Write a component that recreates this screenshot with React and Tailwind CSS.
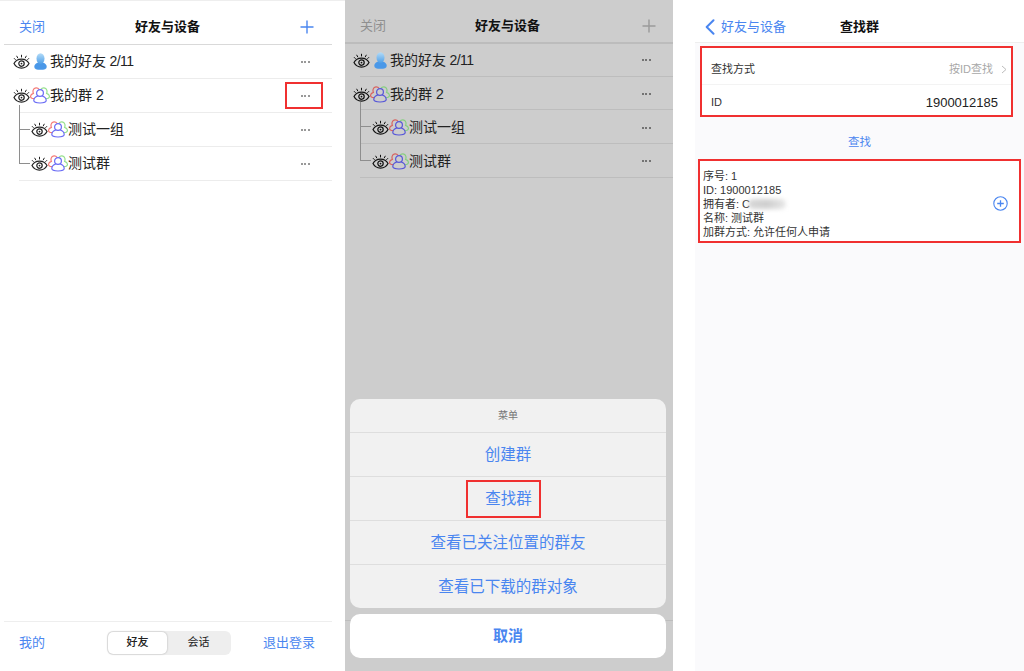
import React from "react";

const font = { fontFamily: '"Liberation Sans","Noto Sans CJK SC",sans-serif' };

function Eye({ dim }) {
  const c = dim ? "#111" : "#222";
  return (
    <svg width="17" height="15" viewBox="0 0 17 15" fill="none" stroke={c} className="shrink-0">
      <path d="M1 9.6 C4 3.6 13 3.6 16 9.6 C13 15.6 4 15.6 1 9.6Z" strokeWidth="1.2" />
      <circle cx="8.5" cy="9.6" r="2.7" strokeWidth="1.2" />
      <circle cx="8.5" cy="9.6" r="0.9" fill={c} stroke="none" />
      <path d="M8.5 0.8V3.4M3.6 1.8L4.9 4.2M13.4 1.8L12.1 4.2M1 4.2L2.6 5.8M16 4.2L14.4 5.8" strokeWidth="1" />
    </svg>
  );
}

function Person({ id }) {
  return (
    <svg width="13" height="17" viewBox="0 0 13 17" className="shrink-0">
      <defs>
        <linearGradient id={id} x1="0" y1="0" x2="0" y2="1">
          <stop offset="0" stopColor="#b4dcf8" />
          <stop offset="1" stopColor="#4f9fe8" />
        </linearGradient>
      </defs>
      <path d="M0.3 14C0.3 11 3 9.6 6.5 9.6S12.7 11 12.7 14C12.7 16 10.5 16.8 6.5 16.8S0.3 16 0.3 14Z" fill="#4a98e8" />
      <ellipse cx="6.5" cy="5.6" rx="4" ry="5.4" fill={`url(#${id})`} />
    </svg>
  );
}

function Group({ dim }) {
  const red = dim ? "#d8635f" : "#f47a76";
  const green = dim ? "#86cf80" : "#96e08d";
  const blue = dim ? "#5656d8" : "#6a6cf5";
  return (
    <svg width="20" height="17" viewBox="0 0 20 17" fill="none" strokeWidth="1.2" className="shrink-0">
      <path d="M4 11.6C1.8 11.6 0.4 10.8 0.6 9C0.8 7.4 2.2 6.8 3.4 6.4C2.6 4.6 2.8 1.2 6 0.9C7.4 0.8 8.4 1.4 9 2.4" stroke={red} />
      <path d="M11 2.4C11.6 1.4 12.6 0.8 14 0.9C17.2 1.2 17.4 4.6 16.6 6.4C17.8 6.8 19.2 7.4 19.4 9C19.6 10.8 18.2 11.6 16 11.6" stroke={green} />
      <circle cx="10" cy="6" r="3.4" stroke={blue} />
      <path d="M7.8 9C5.4 9.8 3.8 11.2 3.8 13.6C3.8 15.4 5.4 16 10 16S16.2 15.4 16.2 13.6C16.2 11.2 14.6 9.8 12.2 9" stroke={blue} />
    </svg>
  );
}

function MoreDots({ dim }) {
  const c = dim ? "bg-[#555]" : "bg-[#777]";
  return (
    <span className="flex gap-[1.5px]">
      <span className={`w-[2px] h-[2px] rounded-full ${c}`} />
      <span className={`w-[2px] h-[2px] rounded-full ${c}`} />
      <span className={`w-[2px] h-[2px] rounded-full ${c}`} />
    </span>
  );
}

function Row({ indent, icon, label, count, dim, boxed, line }) {
  return (
    <div
      className={`relative flex items-center ${dim ? "h-[33.7px] border-[#bdbdbd] pt-[2px]" : "h-[34px] border-[#ececec]"} border-b ${indent ? "pl-[13px]" : ""}`}
    >
      <div className={`flex items-center ${indent ? "ml-[-1px]" : dim ? "ml-[-7px]" : "ml-[-6px]"}`}>
        <Eye dim={dim} />
        <span className="flex justify-center w-[20px]">
          {icon === "person" ? <Person id={dim ? "p2" : "p1"} /> : <Group dim={dim} />}
        </span>
        <span className="text-[14px] text-[#222] whitespace-nowrap">
          {label}
          {count && <span className="tracking-[-0.5px]"> {count}</span>}
        </span>
      </div>
      {line === "mid" && <span className="absolute left-0 top-[-8px] h-[42px] w-px bg-[#8e8e8e]" />}
      {line && <span className="absolute left-[1px] top-[16px] h-px w-[10px] bg-[#8e8e8e]" />}
      {line === "end" && <span className="absolute left-0 top-0 h-[17px] w-px bg-[#8e8e8e]" />}
      <div className="ml-auto w-[54px] flex justify-center">
        {boxed ? (
          <span className="flex items-center justify-center w-[38px] h-[27px] mr-[2px] pl-[2px] border-2 border-[#f03030]"><MoreDots /></span>
        ) : (
          <span className="flex items-center justify-center h-[27px]"><MoreDots dim={dim} /></span>
        )}
      </div>
    </div>
  );
}

function FriendList({ dim }) {
  return (
    <div className={dim ? "ml-[15px]" : "ml-[19px] mr-[13px]"}>
      <Row icon="person" label="我的好友" count="2/11" dim={dim} />
      <Row icon="group" label="我的群 2" dim={dim} boxed={!dim} />
      <Row icon="group" label="测试一组" dim={dim} indent line="mid" />
      <Row icon="group" label="测试群" dim={dim} indent line="end" />
    </div>
  );
}

function Plus({ color }) {
  return (
    <svg width="14" height="14" viewBox="0 0 14 14" stroke={color} strokeWidth="1.4">
      <path d="M7 0.5V13.5M0.5 7H13.5" />
    </svg>
  );
}

function LeftPanel() {
  return (
    <section className="w-[345px] h-[671px] bg-white flex flex-col border-t border-[#eeeeee]">
      <header className="h-[44px] ml-[4px] mr-[13px] flex items-center justify-between border-b border-[#d9d9d9] pl-[15px] pr-[18px] pt-[8px]">
        <span className="text-[13px] text-[#4a86f0]">关闭</span>
        <span className="text-[13px] font-bold text-[#111] ml-[-10px]">好友与设备</span>
        <Plus color="#4a86f0" />
      </header>
      <FriendList />
      <div className="mt-auto h-[50px] ml-[4px] mr-[13px] border-t border-[#eeeeee] pl-[15px] pr-[17px] pb-[8px] flex items-center justify-between">
        <span className="text-[13px] text-[#4a86f0] w-[60px]">我的</span>
        <div className="flex w-[124px] h-[24px] ml-[-4px] rounded-[6px] bg-[#eeeeee] p-[1px] text-[11px] text-[#222]">
          <span className="w-[59px] rounded-[5px] bg-white shadow-[0_0_2px_rgba(0,0,0,0.3)] flex items-center justify-center font-medium">好友</span>
          <span className="flex-1 flex items-center justify-center">会话</span>
        </div>
        <span className="text-[13px] text-[#4a86f0]">退出登录</span>
      </div>
    </section>
  );
}

function Item({ children }) {
  return (
    <div className="h-[44px] border-t border-[#dedede] flex items-center justify-center text-[15.5px] text-[#4a86f0]">{children}</div>
  );
}

function MiddlePanel() {
  return (
    <section className="relative w-[328px] h-[671px] bg-[#cdcdcd] flex flex-col">
      <header className="h-[44px] flex items-center justify-between border-b-2 border-[#bcbcbc] pl-[15px] pr-[17px] pt-[16px] pb-[6px]">
        <span className="text-[13px] text-[#8f8f8f]">关闭</span>
        <span className="text-[13px] font-bold text-[#111] ml-[-13px]">好友与设备</span>
        <Plus color="#9a9a9a" />
      </header>
      <div className="-mt-px"><FriendList dim /></div>
      <div className="absolute inset-x-0 bottom-[50px] h-px bg-[#bdbdbd]" />
      <div className="absolute left-[5px] w-[316px] bottom-[13px] flex flex-col gap-[6px]">
        <div className="rounded-[10px] bg-[#f1f1f1] overflow-hidden">
          <div className="h-[33px] flex items-center justify-center text-[10px] text-[#777]">菜单</div>
          <Item>创建群</Item>
          <Item>
            <span className="flex items-center border-2 border-[#f03030] h-[38px] pl-[17px] pr-[7px] mr-[9px]">查找群</span>
          </Item>
          <Item>查看已关注位置的群友</Item>
          <Item>查看已下载的群对象</Item>
        </div>
        <div className="h-[44px] rounded-[10px] bg-white flex items-center justify-center text-[15px] font-bold text-[#4a86f0]">取消</div>
      </div>
    </section>
  );
}

function RightPanel() {
  return (
    <section className="ml-[22px] flex-1 h-[671px] bg-[#fafafc] flex flex-col">
      <header className="h-[43px] shrink-0 bg-white border-b border-[#eeeeee] flex items-center pl-[10px] pt-[12px]">
        <svg width="10" height="16" viewBox="0 0 10 16" fill="none" stroke="#4a86f0" strokeWidth="2" strokeLinecap="round" strokeLinejoin="round">
          <path d="M8.5 1.2L1.7 8L8.5 14.8" />
        </svg>
        <span className="ml-[6px] text-[13px] text-[#4a86f0]">好友与设备</span>
        <span className="ml-[54px] text-[13px] font-bold text-[#111]">查找群</span>
      </header>
      <div className="mt-[3px] ml-[5px] w-[313px] h-[71px] shrink-0 border-2 border-[#f03030] bg-white text-[11px] text-[#333]">
        <div className="h-[37px] pl-[9px] pr-[4px] pt-[7px] flex items-center justify-between border-b border-[#f3f3f3]">
          <span>查找方式</span>
          <span className="flex items-center text-[#a8a8a8]">
            按ID查找
            <svg width="6" height="9" viewBox="0 0 6 9" fill="none" stroke="#bdbdbd" strokeWidth="1" className="ml-[8px]"><path d="M1 1L5 4.5L1 8" /></svg>
          </span>
        </div>
        <div className="h-[30px] pl-[9px] pr-[13px] pt-[5px] flex items-center justify-between">
          <span>ID</span>
          <span className="text-[13px] text-[#222]">1900012185</span>
        </div>
      </div>
      <div className="h-[42px] shrink-0 pt-[10px] flex items-center justify-center text-[11.5px] text-[#4a86f0]">查找</div>
      <div className="ml-[3px] w-[323px] h-[84px] shrink-0 border-2 border-[#f03030] bg-white pl-[3px] pr-[11px] pt-[5px] flex items-center justify-between text-[11px] leading-[14px] text-[#333]">
        <div>
          <div>序号: 1</div>
          <div>ID: 1900012185</div>
          <div className="flex items-center">
            <span>拥有者: C</span>
            <span className="ml-[-2px] w-[38px] h-[10px] rounded-full bg-gradient-to-r from-[#d8d8d8] via-[#cfcfcf] to-[#e8e8e8] blur-[2px]" />
          </div>
          <div>名称: 测试群</div>
          <div>加群方式: 允许任何人申请</div>
        </div>
        <svg width="15" height="15" viewBox="0 0 15 15" fill="none" stroke="#4a86f0" strokeWidth="1.1">
          <circle cx="7.5" cy="7.5" r="6.7" />
          <path d="M7.5 4.2V10.8M4.2 7.5H10.8" strokeWidth="1.3" />
        </svg>
      </div>
    </section>
  );
}

export default function App() {
  return (
    <div className="flex w-[1024px] h-[671px] bg-white overflow-hidden" style={font}>
      <LeftPanel />
      <MiddlePanel />
      <RightPanel />
    </div>
  );
}
